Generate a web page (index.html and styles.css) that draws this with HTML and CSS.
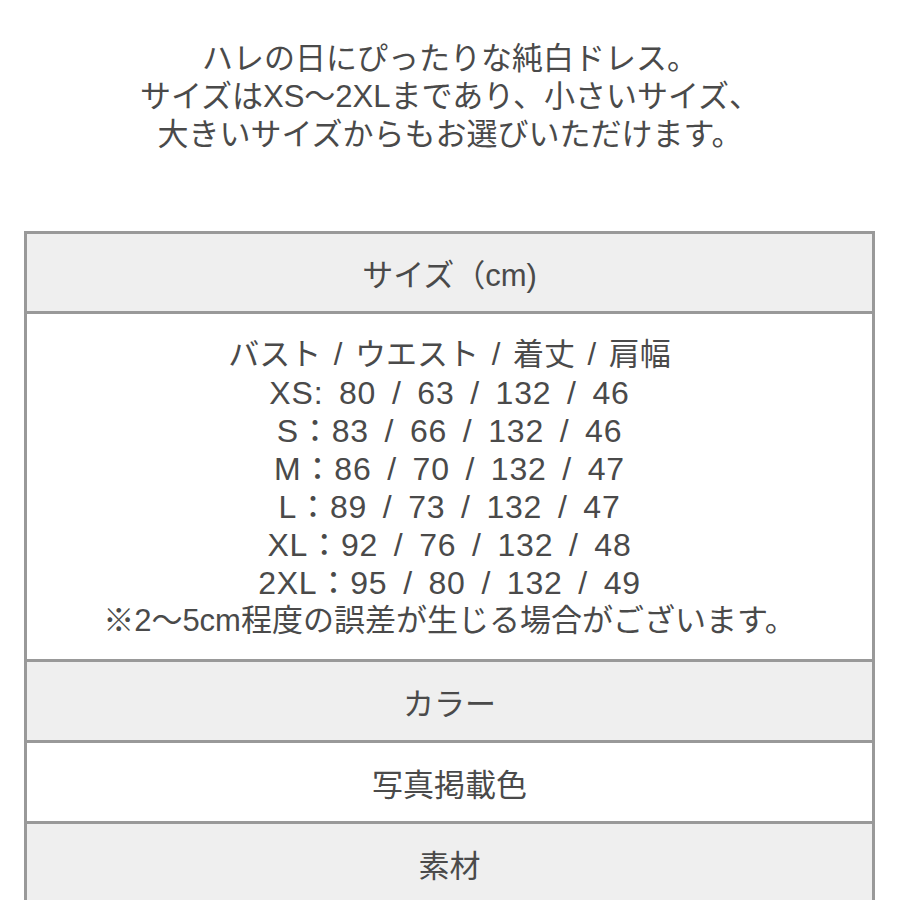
FILE: index.html
```html
<!DOCTYPE html>
<html lang="ja">
<head>
<meta charset="utf-8">
<link rel="stylesheet" href="styles.css">
</head>
<body>
<div class="page">
  <div class="intro">
    <p>ハレの日にぴったりな純白ドレス。</p>
    <p>サイズはXS〜2XLまであり、小さいサイズ、</p>
    <p>大きいサイズからもお選びいただけます。</p>
  </div>
  <div class="spec">
    <div class="row head">サイズ（cm)</div>
    <div class="row body">
      <p class="cols">バスト / ウエスト / 着丈 / 肩幅</p>
      <p class="num">XS: 80 / 63 / 132 / 46</p>
      <p class="num">S：83 / 66 / 132 / 46</p>
      <p class="num">M：86 / 70 / 132 / 47</p>
      <p class="num">L：89 / 73 / 132 / 47</p>
      <p class="num">XL：92 / 76 / 132 / 48</p>
      <p class="num">2XL：95 / 80 / 132 / 49</p>
      <p>※2〜5cm程度の誤差が生じる場合がございます。</p>
    </div>
    <div class="row head">カラー</div>
    <div class="row plain">写真掲載色</div>
    <div class="row head">素材</div>
  </div>
</div>
</body>
</html>
```
FILE: styles.css
```css
html, body {
  margin: 0;
  padding: 0;
  background: #ffffff;
}
.page {
  font-family: "Liberation Sans", "Noto Sans CJK JP", sans-serif;
  color: #4a4a4a;
  font-size: 31px;
  text-align: center;
  padding-top: 40px;
  height: 900px;
  overflow: hidden;
  box-sizing: border-box;
}
p {
  margin: 0;
}
.intro {
  line-height: 38px;
}
.spec {
  margin: 77px 25px 0 24px;
  border: 3px solid #999999;
  border-bottom: none;
}
.row {
  border-top: 3px solid #999999;
  height: 78px;
  display: flex;
  align-items: center;
  justify-content: center;
}
.row:first-child {
  border-top: none;
  height: 77px;
}
.head {
  background: #efefef;
}
.plain {
  background: #ffffff;
}
.body {
  height: auto;
  display: block;
  padding: 22px 0 19px;
  line-height: 38px;
  background: #ffffff;
}
.cols {
  word-spacing: 4px;
}
.num {
  font-size: 32px;
  word-spacing: 6px;
  letter-spacing: 0.8px;
}
```
